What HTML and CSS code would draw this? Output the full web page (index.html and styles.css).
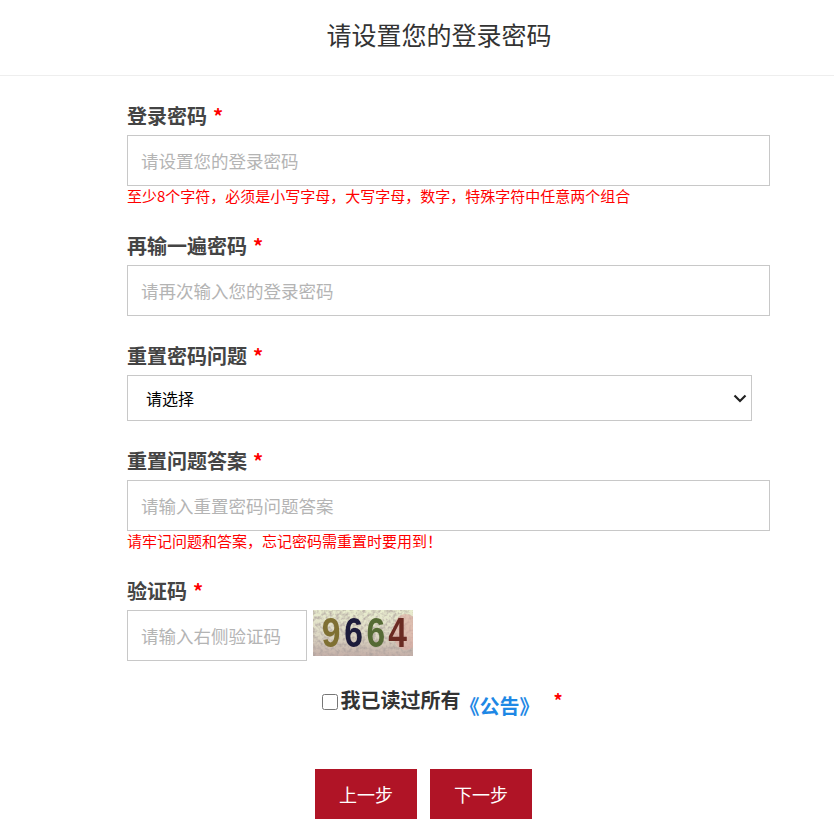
FILE: index.html
```html
<!DOCTYPE html>
<html lang="zh-CN">
<head>
  <meta charset="UTF-8">
  <title>请设置您的登录密码</title>
  <link rel="stylesheet" href="styles.css">
</head>
<body>

<header class="page-head">
  <h1>请设置您的登录密码</h1>
</header>

<form class="reg-form">

  <div class="field">
    <label class="field-label">登录密码<span class="req">*</span></label>
    <input class="text-input" type="password" placeholder="请设置您的登录密码">
    <p class="hint">至少8个字符，必须是小写字母，大写字母，数字，特殊字符中任意两个组合</p>
  </div>

  <div class="field">
    <label class="field-label">再输一遍密码<span class="req">*</span></label>
    <input class="text-input" type="password" placeholder="请再次输入您的登录密码">
  </div>

  <div class="field">
    <label class="field-label">重置密码问题<span class="req">*</span></label>
    <select class="select-input">
      <option>请选择</option>
    </select>
  </div>

  <div class="field">
    <label class="field-label">重置问题答案<span class="req">*</span></label>
    <input class="text-input" type="text" placeholder="请输入重置密码问题答案">
    <p class="hint">请牢记问题和答案，忘记密码需重置时要用到！</p>
  </div>

  <div class="field field-last">
    <label class="field-label">验证码<span class="req">*</span></label>
    <div class="captcha-row">
      <input class="text-input captcha-input" type="text" placeholder="请输入右侧验证码">
      <svg class="captcha-img" width="100" height="46" viewBox="0 0 100 46">
        <defs>
          <linearGradient id="captchaBg" x1="0" y1="0" x2="0" y2="1">
            <stop offset="0" stop-color="#e9edcf"/>
            <stop offset="0.55" stop-color="#ddd8c4"/>
            <stop offset="1" stop-color="#c4afa8"/>
          </linearGradient>
          <filter id="captchaNoise" x="0" y="0" width="100%" height="100%">
            <feTurbulence type="fractalNoise" baseFrequency="0.3" numOctaves="2" seed="6"/>
            <feColorMatrix values="0 0 0 0 0.42  0 0 0 0 0.36  0 0 0 0 0.34  0 0 0 2 -0.8"/>
          </filter>
          <filter id="captchaBlur"><feGaussianBlur stdDeviation="0.6"/></filter>
        </defs>
        <rect width="100" height="46" fill="url(#captchaBg)"/>
        <rect width="100" height="46" filter="url(#captchaNoise)"/>
        <ellipse cx="93" cy="22" rx="13" ry="18" fill="#dca9a0" opacity="0.6"/>
        <g class="captcha-digits" filter="url(#captchaBlur)" transform="scale(0.8 1)">
          <text x="11" y="37" fill="#7f6f32">9</text>
          <text x="39" y="37" fill="#1d1a3a">6</text>
          <text x="67" y="37" fill="#566b34">6</text>
          <text x="94" y="37" fill="#6b2a22">4</text>
        </g>
      </svg>
    </div>
  </div>

  <div class="agree">
    <input class="agree-check" type="checkbox">
    <span class="agree-text">我已读过所有</span>
    <a class="agree-link" href="#">《公告》</a>
    <span class="agree-req">*</span>
  </div>

  <div class="actions">
    <button class="btn" type="button">上一步</button>
    <button class="btn" type="button">下一步</button>
  </div>

</form>

</body>
</html>
```

FILE: styles.css
```css
* {
  box-sizing: border-box;
}

body {
  margin: 0;
  background-color: #ffffff;
  font-family: "Noto Sans CJK SC", "Liberation Sans", sans-serif;
  color: #333333;
}

.page-head {
  height: 76px;
  border-bottom: 1px solid #eeeeee;
  padding-left: 44px;
  text-align: center;
}

.page-head h1 {
  margin: 0;
  font-size: 25px;
  font-weight: 400;
  line-height: 68px;
}

.reg-form {
  width: 643px;
  margin-left: 127px;
  padding-top: 29px;
}

.field {
  margin-bottom: 29px;
}

.field-last {
  margin-bottom: 0;
}

.field-label {
  display: block;
  height: 30px;
  font-size: 20px;
  font-weight: 700;
  line-height: 22px;
  color: #444444;
}

.req {
  margin-left: 6px;
  color: #ff0000;
}

.text-input {
  display: block;
  width: 100%;
  height: 51px;
  padding: 0 13px;
  border: 1px solid #c8c8c8;
  border-radius: 0;
  outline: none;
  font-family: inherit;
  font-size: 17.5px;
}

.text-input::placeholder {
  color: #b4b4b4;
}

.hint {
  height: 20px;
  margin: 0;
  font-size: 15px;
  line-height: 20px;
  color: #ff0000;
}

.select-input {
  display: block;
  width: 625px;
  height: 46px;
  padding: 0 18px;
  border: 1px solid #c8c8c8;
  border-radius: 0;
  appearance: none;
  background: #ffffff url("data:image/svg+xml,%3Csvg xmlns='http://www.w3.org/2000/svg' width='14' height='9' viewBox='0 0 14 9'%3E%3Cpath d='M1.5 1.5 7 7l5.5-5.5' fill='none' stroke='%23222' stroke-width='2.2'/%3E%3C/svg%3E") no-repeat right 4px center;
  font-family: inherit;
  font-size: 16px;
  color: #000000;
}

.captcha-row {
  display: flex;
  align-items: flex-start;
  gap: 6px;
}

.captcha-input {
  width: 180px;
}

.captcha-img {
  display: block;
}

.captcha-digits {
  font-family: "Liberation Sans", sans-serif;
  font-size: 42px;
  font-weight: 700;
}

.agree {
  display: flex;
  justify-content: center;
  align-items: flex-start;
  height: 108px;
  padding: 27px 12px 0 0;
}

.agree-check {
  width: 16px;
  height: 16px;
  margin: 6px 2px 0 0;
}

.agree-text {
  font-size: 20px;
  font-weight: 700;
  line-height: 24px;
  color: #333333;
}

.agree-link {
  margin: 6px 0 0 -1px;
  font-size: 20px;
  font-weight: 700;
  line-height: 24px;
  color: #1e88e5;
  text-decoration: none;
}

.agree-req {
  margin: 1px 0 0 14px;
  font-size: 18px;
  font-weight: 700;
  line-height: 22px;
  color: #ff0000;
}

.actions {
  display: flex;
  justify-content: center;
  gap: 13px;
  padding-right: 50px;
}

.btn {
  width: 102px;
  height: 50px;
  border: none;
  background-color: #b01426;
  color: #ffffff;
  font-family: inherit;
  font-size: 18px;
}
```
